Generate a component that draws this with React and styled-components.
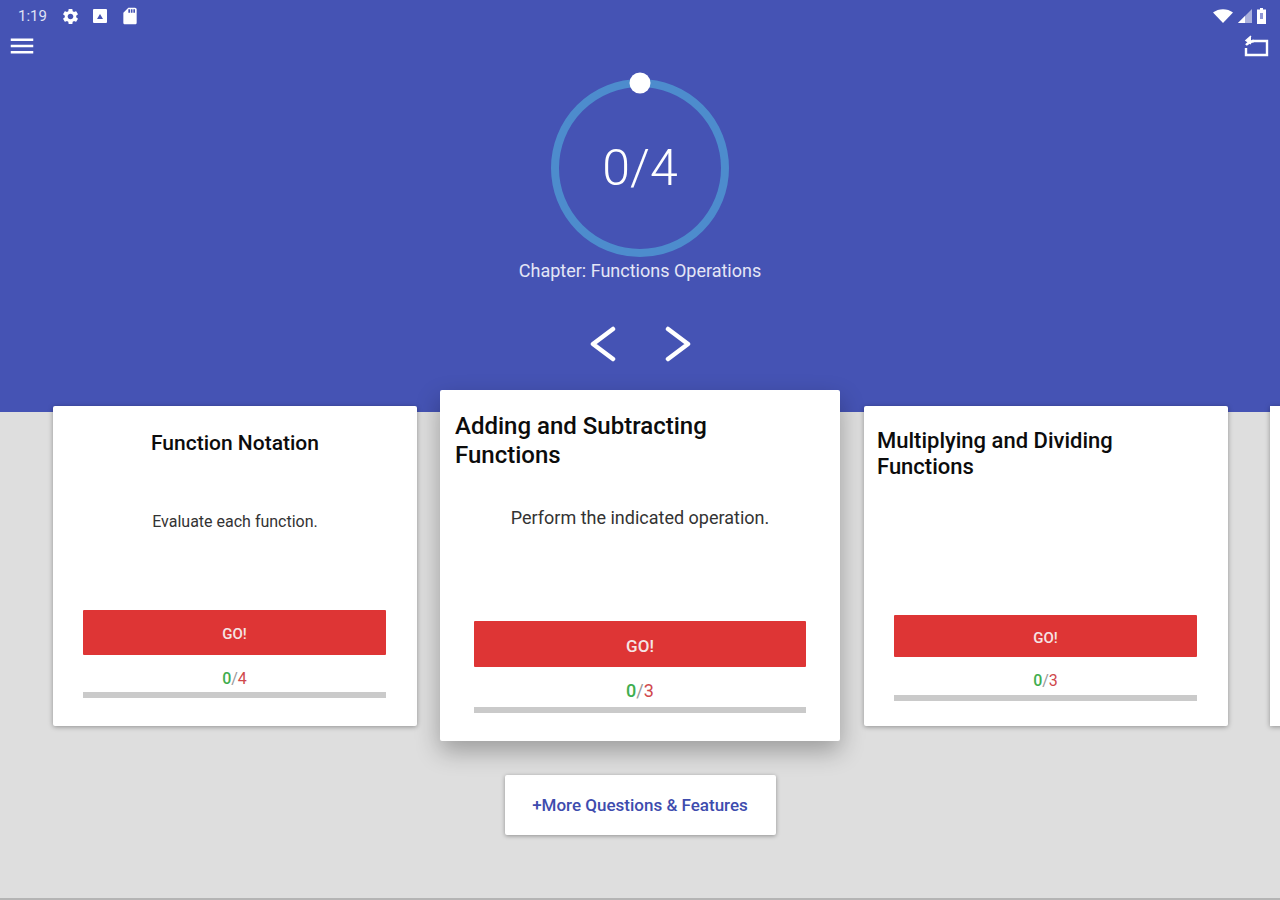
import React from 'react'
import styled, { createGlobalStyle } from 'styled-components'
import { MdSettings, MdSdCard, MdMenu } from 'react-icons/md'

const GlobalStyle = createGlobalStyle`
  html, body {
    margin: 0;
    padding: 0;
    background: #dedede;
    font-family: Roboto, "Liberation Sans", sans-serif;
  }
`

const cards = [
  {
    size: 'side',
    align: 'center',
    title: 'Function Notation',
    body: 'Evaluate each function.',
    total: 4,
  },
  {
    size: 'main',
    align: 'left',
    title: 'Adding and Subtracting Functions',
    body: 'Perform the indicated operation.',
    total: 3,
  },
  {
    size: 'alt',
    align: 'left',
    title: 'Multiplying and Dividing Functions',
    total: 3,
  },
]

const App = () => {
  return (
    <Page>
      <GlobalStyle />
      <Hero>
        <StatusBar>
          <StatusGroup>
            <Clock>1:19</Clock>
            <MdSettings size={19} />
            <ImageBadge viewBox="0 0 14 14" width="14" height="14">
              <rect width="14" height="14" rx="1" fill="#fff" />
              <path d="M4 10 7 5l3 5z" fill="#4553b4" />
            </ImageBadge>
            <MdSdCard size={20} />
          </StatusGroup>
          <StatusGroup $tight>
            <svg viewBox="0 0 20 14" width="20" height="14">
              <path d="M0 3.5C5.5-1 14.5-1 20 3.5L10 14z" fill="#fff" />
            </svg>
            <svg viewBox="0 0 14 14" width="14" height="14">
              <path d="M14 0v14H0z" fill="#fff" fillOpacity=".55" />
              <path d="M7 7v7H0z" fill="#fff" />
            </svg>
            <svg viewBox="0 0 9 16" width="9" height="16">
              <path d="M3 0h3v1.5h3V16H0V1.5h3z" fill="#fff" />
              <rect x="3" y="5" width="3" height="6" fill="#8f97d6" />
            </svg>
          </StatusGroup>
        </StatusBar>
        <ToolBar>
          <MdMenu size={30} />
          <svg viewBox="0 0 26 22" width="26" height="22" fill="none" stroke="#fff" strokeWidth="2.4">
            <path d="M9 6h15v14H3v-7" />
            <path d="M11 6C8 6 5 8 3 10" />
            <path d="M8 1 3 5.5 8 9" fill="#fff" strokeWidth="1.5" />
          </svg>
        </ToolBar>
        <Progress>
          <svg viewBox="0 0 200 200" width="200" height="200">
            <circle cx="100" cy="100" r="85" fill="none" stroke="#4d8ccd" strokeWidth="8" />
            <circle cx="100" cy="15" r="10.5" fill="#fff" />
          </svg>
          <ProgressValue>0/4</ProgressValue>
        </Progress>
        <Chapter>Chapter: Functions Operations</Chapter>
        <Arrows>
          <svg viewBox="0 0 28 36" width="28" height="36" fill="none" stroke="#fff" strokeWidth="4.5" strokeLinecap="round" strokeLinejoin="round">
            <path d="M24 3 4 18l20 15" />
          </svg>
          <svg viewBox="0 0 28 36" width="28" height="36" fill="none" stroke="#fff" strokeWidth="4.5" strokeLinecap="round" strokeLinejoin="round">
            <path d="M4 3l20 15L4 33" />
          </svg>
        </Arrows>
      </Hero>
      <CardRow>
        {cards.map((card) => (
          <Card key={card.title} $size={card.size}>
            <CardTitle $size={card.size} $align={card.align}>{card.title}</CardTitle>
            {card.body && <CardBody $size={card.size}>{card.body}</CardBody>}
            <CardFooter $size={card.size}>
              <GoButton $size={card.size}>GO!</GoButton>
              <Score $size={card.size}>
                <Done>0</Done>
                <Slash>/</Slash>
                <Total>{card.total}</Total>
              </Score>
              <ScoreBar $size={card.size} />
            </CardFooter>
          </Card>
        ))}
        <NextCard />
      </CardRow>
      <MoreButton>+More Questions &amp; Features</MoreButton>
    </Page>
  )
}

export default App

const Page = styled.div`
  height: 900px;
  overflow: hidden;
  display: flex;
  flex-direction: column;
  background: #dedede;
  border-bottom: 2px solid #b4b4b4;
  box-sizing: border-box;
`
const Hero = styled.div`
  height: 412px;
  flex-shrink: 0;
  background: #4553b4;
  color: #fff;
  display: flex;
  flex-direction: column;
  align-items: center;
`
const StatusBar = styled.div`
  width: 100%;
  height: 32px;
  box-sizing: border-box;
  padding: 0 14px 0 18px;
  display: flex;
  justify-content: space-between;
  align-items: center;
`
const StatusGroup = styled.div`
  display: flex;
  align-items: center;
  gap: ${(p) => (p.$tight ? '5px' : '13px')};
`
const Clock = styled.span`
  font-size: 15px;
  color: #dfe2f5;
  margin-right: 1px;
`
const ImageBadge = styled.svg`
  display: block;
`
const ToolBar = styled.div`
  width: 100%;
  height: 24px;
  box-sizing: border-box;
  padding: 0 11px 0 7px;
  display: flex;
  justify-content: space-between;
  align-items: center;
  margin-top: 2px;
`
const Progress = styled.div`
  display: grid;
  place-items: center;
  margin-top: 10px;
  > * {
    grid-area: 1 / 1;
  }
`
const ProgressValue = styled.div`
  font-size: 50px;
  font-weight: 300;
  line-height: 1;
`
const Chapter = styled.div`
  font-size: 18px;
  color: #e4e6f6;
  line-height: 22px;
  margin-top: -8px;
`
const Arrows = styled.div`
  display: flex;
  gap: 47px;
  margin-top: 44px;
`
const CardRow = styled.div`
  display: flex;
  align-items: center;
  margin-top: -22px;
  padding-left: 53px;
  position: relative;
`
const Card = styled.div`
  flex-shrink: 0;
  box-sizing: border-box;
  background: #fff;
  border-radius: 2px;
  display: flex;
  flex-direction: column;
  width: ${(p) => (p.$size === 'main' ? '400px' : '364px')};
  height: ${(p) => (p.$size === 'main' ? '351px' : '320px')};
  margin-right: ${(p) => (p.$size === 'main' ? '24px' : p.$size === 'alt' ? '42px' : '23px')};
  padding-top: ${(p) => (p.$size === 'main' ? '22px' : p.$size === 'alt' ? '22px' : '24px')};
  box-shadow: ${(p) =>
    p.$size === 'main'
      ? '0 10px 24px rgba(0, 0, 0, 0.3)'
      : '0 1px 5px rgba(0, 0, 0, 0.35)'};
`
const CardTitle = styled.div`
  font-weight: 500;
  color: #0c0c0c;
  text-align: ${(p) => p.$align};
  font-size: ${(p) => (p.$size === 'main' ? '24px' : p.$size === 'alt' ? '22px' : '21px')};
  line-height: ${(p) => (p.$size === 'main' ? '29px' : p.$size === 'alt' ? '26px' : '26px')};
  padding: 0 ${(p) => (p.$size === 'main' ? '60px' : '40px')} 0 ${(p) => (p.$size === 'main' ? '15px' : p.$size === 'alt' ? '13px' : '40px')};
`
const CardBody = styled.div`
  color: #333;
  text-align: center;
  font-size: ${(p) => (p.$size === 'main' ? '18px' : '16px')};
  line-height: 22px;
  margin-top: ${(p) => (p.$size === 'main' ? '37px' : '55px')};
`
const CardFooter = styled.div`
  margin-top: auto;
  display: flex;
  flex-direction: column;
  align-items: stretch;
  padding: 0 ${(p) => (p.$size === 'main' ? '34px' : '31px')} ${(p) => (p.$size === 'alt' ? '25px' : '28px')};
  padding-left: ${(p) => (p.$size === 'main' ? '34px' : '30px')};
`
const GoButton = styled.div`
  background: #de3535;
  color: #f5e5e5;
  font-weight: 500;
  text-align: center;
  border-radius: 1px;
  font-size: ${(p) => (p.$size === 'main' ? '17px' : '15px')};
  height: ${(p) => (p.$size === 'main' ? '46px' : p.$size === 'alt' ? '42px' : '45px')};
  line-height: ${(p) => (p.$size === 'main' ? '51px' : p.$size === 'alt' ? '46px' : '48px')};
`
const Score = styled.div`
  text-align: center;
  font-size: ${(p) => (p.$size === 'main' ? '18px' : '16px')};
  line-height: 22px;
  margin-top: ${(p) => (p.$size === 'main' ? '13px' : '13px')};
`
const Done = styled.span`
  color: #3fae4f;
  font-weight: 500;
`
const Slash = styled.span`
  color: #999;
`
const Total = styled.span`
  color: #d0484c;
`
const ScoreBar = styled.div`
  background: #cacaca;
  height: 6px;
  margin-top: ${(p) => (p.$size === 'main' ? '5px' : p.$size === 'alt' ? '3px' : '2px')};
`
const NextCard = styled.div`
  flex-shrink: 0;
  width: 364px;
  height: 320px;
  background: #fff;
  box-shadow: 0 1px 5px rgba(0, 0, 0, 0.35);
`
const MoreButton = styled.div`
  align-self: center;
  width: 271px;
  height: 60px;
  margin-top: 34px;
  background: #fff;
  color: #3e4cae;
  font-size: 17px;
  font-weight: 500;
  line-height: 60px;
  text-align: center;
  border-radius: 2px;
  box-shadow: 0 1px 4px rgba(0, 0, 0, 0.35);
`
